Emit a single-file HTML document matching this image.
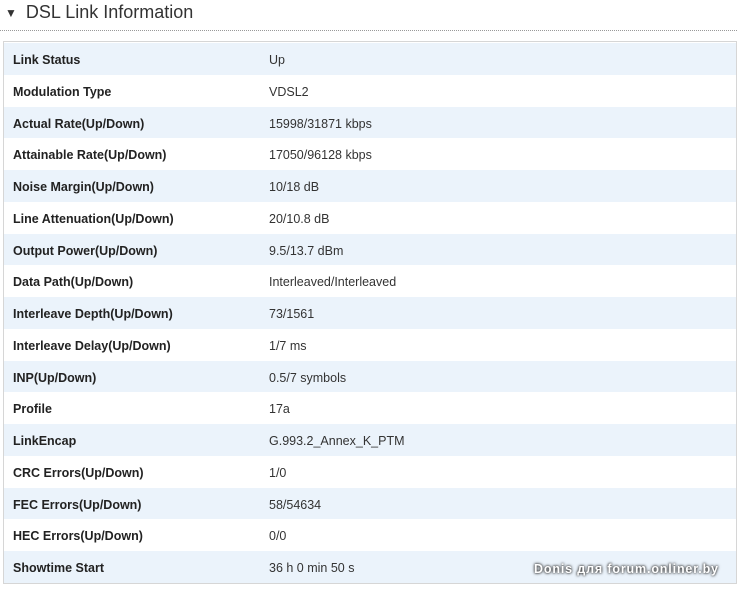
<!DOCTYPE html><html><head><style>
body{margin:0;width:741px;height:593px;background:#fff;font-family:"Liberation Sans",sans-serif;position:relative;overflow:hidden}
.h{position:absolute;left:5px;top:2px;font-size:18px;color:#333}
.h span{font-size:12px;margin-right:9px;position:relative;top:-1px}
.dl{position:absolute;left:0;right:4px;top:30px;border-top:1px dotted #999}
.box{position:absolute;left:3px;top:41px;width:732px;height:540px;border:1px solid #d6d6d6;padding-top:1px}
.r{height:31.75px;line-height:35px;font-size:12.5px;color:#333;position:relative}
.r:nth-child(odd){background:#ebf3fb}
.r b{position:absolute;left:9px;color:#222}
.r i{position:absolute;left:265px;font-style:normal}
.wm{position:absolute;left:534px;top:562px;font-size:12.5px;letter-spacing:0.85px;font-weight:bold;color:#fff;text-shadow:0 0 3px #333,0 0 2px #333}
</style></head><body>
<div class="h"><span>▼</span>DSL Link Information</div>
<div class="dl"></div>
<div class="box">
<div class="r"><b>Link Status</b><i>Up</i></div>
<div class="r"><b>Modulation Type</b><i>VDSL2</i></div>
<div class="r"><b>Actual Rate(Up/Down)</b><i>15998/31871 kbps</i></div>
<div class="r"><b>Attainable Rate(Up/Down)</b><i>17050/96128 kbps</i></div>
<div class="r"><b>Noise Margin(Up/Down)</b><i>10/18 dB</i></div>
<div class="r"><b>Line Attenuation(Up/Down)</b><i>20/10.8 dB</i></div>
<div class="r"><b>Output Power(Up/Down)</b><i>9.5/13.7 dBm</i></div>
<div class="r"><b>Data Path(Up/Down)</b><i>Interleaved/Interleaved</i></div>
<div class="r"><b>Interleave Depth(Up/Down)</b><i>73/1561</i></div>
<div class="r"><b>Interleave Delay(Up/Down)</b><i>1/7 ms</i></div>
<div class="r"><b>INP(Up/Down)</b><i>0.5/7 symbols</i></div>
<div class="r"><b>Profile</b><i>17a</i></div>
<div class="r"><b>LinkEncap</b><i>G.993.2_Annex_K_PTM</i></div>
<div class="r"><b>CRC Errors(Up/Down)</b><i>1/0</i></div>
<div class="r"><b>FEC Errors(Up/Down)</b><i>58/54634</i></div>
<div class="r"><b>HEC Errors(Up/Down)</b><i>0/0</i></div>
<div class="r"><b>Showtime Start</b><i>36 h 0 min 50 s</i></div>
</div>
<div class="wm">Donis для forum.onliner.by</div>
</body></html>
